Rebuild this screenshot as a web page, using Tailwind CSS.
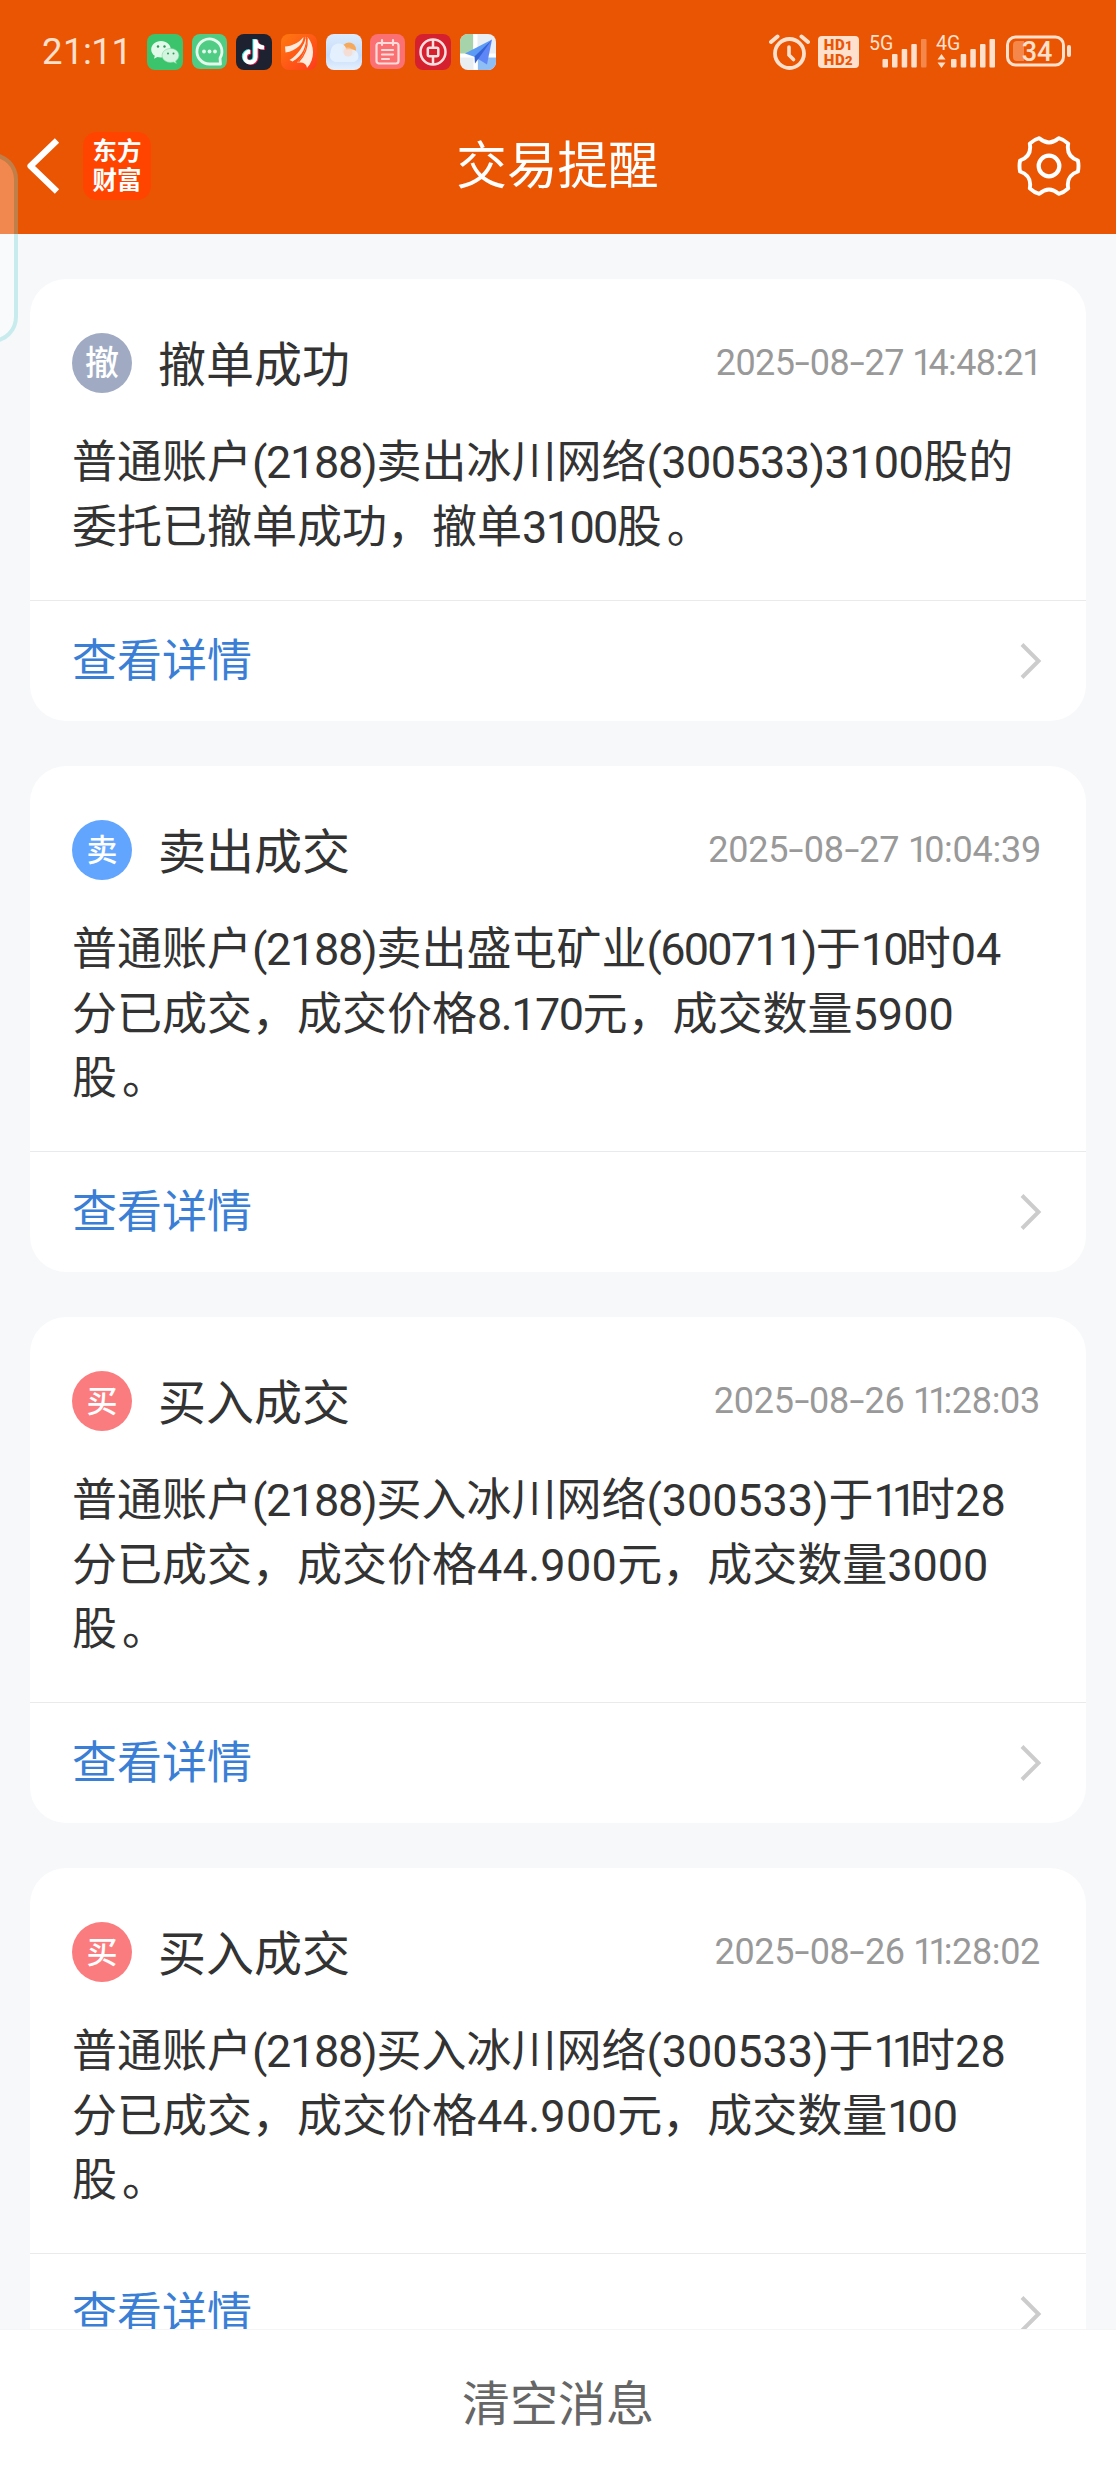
<!DOCTYPE html>
<html lang="zh-CN">
<head>
  <meta charset="UTF-8" />
  <meta name="viewport" content="width=device-width, initial-scale=1" />
  <title>交易提醒</title>
  <script src="https://cdn.jsdelivr.net/npm/@tailwindcss/browser@4"></script>
</head>
<body class="bg-[#f7f8fa] font-['Roboto','Noto_Sans_CJK_SC',sans-serif]">
  <div class="relative flex flex-col w-[1116px] h-[2480px] overflow-hidden">

    <header class="shrink-0 h-[234px] bg-[#ea5504]">
      <!-- Status bar -->
      <div class="flex items-center justify-between h-[104px] pl-[42px] pr-[45px] text-[#ffe0cc]">
        <div class="flex items-center">
          <span class="w-[105px] text-[36.5px] leading-none"><span class="tracking-[0.5px]">2</span><span class="tracking-[-0.5px]">1:1</span>1</span>
          <div class="flex gap-[8.7px]">
            <!-- WeChat -->
            <svg class="w-9 h-9" viewBox="0 0 36 36">
              <rect width="36" height="36" rx="8" fill="#3cc46c" />
              <path d="M14 7c-5.500 0-9.800 3.800-9.800 8.400 0 2.600 1.400 4.900 3.600 6.400l-.8 3 3.400-1.800c1.100.3 2.300.5 3.600.5 5.500 0 9.800-3.700 9.800-8.200S19.500 7 14 7z" fill="#e3faea" />
              <path d="M23.500 14.500c-4.700 0-8.400 3.100-8.400 6.900s3.700 7 8.400 7c1 0 2-.1 2.900-.4l3 1.400-.8-2.500c2-1.300 3.300-3.300 3.300-5.500 0-3.800-3.700-6.900-8.400-6.900z" fill="#d3f5df" stroke="#7fd9a0" stroke-width=".6" />
              <g fill="#2b9a55"><circle cx="11" cy="12.500" r="1.200" /><circle cx="17.500" cy="12.500" r="1.200" /><circle cx="21" cy="19.500" r="1" /><circle cx="26.500" cy="19.500" r="1" /></g>
            </svg>
            <!-- Messages -->
            <svg class="w-9 h-9" viewBox="0 0 36 36">
              <rect width="35" height="35" rx="8" fill="#50cc84" />
              <path d="M28.500 30H17.500A12.500 12.500 0 1 1 28 24.200z" fill="none" stroke="#e4faec" stroke-width="2.800" stroke-linejoin="round" />
              <g fill="#e4faec"><circle cx="12" cy="17.500" r="1.900" /><circle cx="17.500" cy="17.500" r="1.900" /><circle cx="23" cy="17.500" r="1.900" /></g>
            </svg>
            <!-- Douyin -->
            <svg class="w-9 h-9" viewBox="0 0 36 36">
              <rect width="36" height="36" rx="8" fill="#1d2130" />
              <g fill="none" stroke-width="4.200">
                <path d="M18.500 5v17.500a5.300 5.300 0 1 1-5.300-5.300M18.500 6.500c.8 4.200 4 6.300 8.500 6.500" stroke="#3fe0e0" />
                <path d="M20.500 6v17.500a5.300 5.300 0 1 1-5.300-5.300M20.500 7.500c.8 4.200 4 6.300 8.500 6.500" stroke="#f0285a" />
                <path d="M19.500 5.500v17.500a5.300 5.300 0 1 1-5.300-5.300M19.500 7c.8 4.200 4 6.300 8.500 6.500" stroke="#fff" />
              </g>
            </svg>
            <!-- Eastmoney securities -->
            <svg class="w-9 h-9" viewBox="0 0 36 36">
              <defs><linearGradient id="em" x1="0" y1="0" x2="1" y2="1"><stop offset="0" stop-color="#ff7a10" /><stop offset="1" stop-color="#ff3a1c" /></linearGradient></defs>
              <rect width="36" height="36" rx="8" fill="url(#em)" />
              <g fill="#ffeadd">
                <path d="M4 12.500C11 12 18 9 22.500 3c0 6-7 14-18 15.500z" />
                <path d="M8.500 26C17 21 23 12 24.500 2.500c2 8-3 20-13 25z" />
                <path d="M16 28.500C23 22 26 12 26.500 3c7 8 8 22-.5 31-.5-4-3-6-10-5.500z" />
              </g>
              <path d="M24 4c-1 7-7 13-15 17M26 4c1 9-2 17-8.500 24" fill="none" stroke="#ff5a18" stroke-width="1.200" />
            </svg>
            <!-- Weather -->
            <svg class="w-9 h-9" viewBox="0 0 36 36">
              <defs><linearGradient id="wt" x1="0" y1="0" x2="0" y2="1"><stop offset="0" stop-color="#dcebfb" /><stop offset=".6" stop-color="#c3dcfb" /><stop offset="1" stop-color="#e6f0fc" /></linearGradient></defs>
              <rect width="36" height="36" rx="8" fill="url(#wt)" />
              <circle cx="23" cy="15.500" r="7" fill="#f5a95c" />
              <path d="M10 28a6.500 6.500 0 0 1-5.500-9.500C5 12 9 9.500 13 9.500s6.500 2.500 7.500 6c5-1 12 .5 12 6.500 0 4-3 6-6.500 6z" fill="#e6f1fe" fill-opacity=".93" />
              <circle cx="22" cy="18" r="4.500" fill="#fbd3c0" fill-opacity=".6" />
            </svg>
            <!-- Calendar -->
            <svg class="w-9 h-9" viewBox="0 0 36 36">
              <rect width="35" height="35" rx="8" fill="#fb7072" />
              <g fill="none" stroke="#ffdcdc" stroke-width="2.200" stroke-linecap="round">
                <rect x="6.500" y="9" width="22" height="20.500" rx="2.500" />
                <path d="M12 6v5M23 6v5M12 16h11M12 20.500h11M12 25h7" />
              </g>
            </svg>
            <!-- Bank of China -->
            <svg class="w-9 h-9" viewBox="0 0 36 36">
              <rect width="36" height="36" rx="8" fill="#d5202f" />
              <g fill="none" stroke="#ffdfe0" stroke-width="2.500">
                <circle cx="18" cy="18" r="12.500" />
                <rect x="12.800" y="13.800" width="10.500" height="8.500" rx="1.500" />
                <path d="M18 5.500v8M18 22.500v8" />
              </g>
            </svg>
            <!-- Maps -->
            <svg class="w-9 h-9" viewBox="0 0 36 36">
              <defs><clipPath id="mp"><rect width="36" height="36" rx="8" /></clipPath></defs>
              <g clip-path="url(#mp)">
                <rect width="36" height="36" fill="#e9eef3" />
                <rect width="13" height="20" fill="#a6d3aa" />
                <path d="M18 23h18v13H18z" fill="#8fbef5" />
                <path d="M15.500 0v36M0 21.500h36" stroke="#fff" stroke-width="4" />
              </g>
              <path d="M32 5.500 5 19.500l10 3.500z" fill="#5b9bf5" />
              <path d="M32 5.500 15 23l12 7.500z" fill="#5f86f7" />
              <path d="M32 5.500 14.500 22.500l.5 7z" fill="#3564d8" />
            </svg>
          </div>
        </div>

        <div class="flex items-center">
          <!-- Alarm -->
          <svg class="w-[41px] h-9 mr-2" viewBox="0 0 41 36" fill="none" stroke="currentColor" stroke-linecap="round">
            <circle cx="20.500" cy="19.500" r="14.500" stroke-width="3.800" />
            <path d="M20 13v8l4.500 4.500" stroke-width="3.600" />
            <path d="M2 8l6.500-5.500M39 8l-6.500-5.500" stroke-width="4" />
          </svg>
          <!-- HD1 / HD2 -->
          <div class="w-[41px] h-8 mr-[9px] rounded-[4px] bg-[#ffe0cc] text-[#ea5504] text-[15px] leading-[14px] pt-[2px] font-black text-center tracking-[0.5px]">
            <p>HD<span class="text-[13px]">1</span></p>
            <p>HD<span class="text-[13px]">2</span></p>
          </div>
          <!-- 5G signal -->
          <svg class="w-[60px] h-10 mr-[7px]" viewBox="-1 -2 60 40" fill="currentColor">
            <text x="0" y="16" font-size="19.500">5G</text>
            <rect x="13.500" y="25" width="5.500" height="8.500" rx="1" />
            <rect x="23" y="20" width="5.500" height="13.500" rx="1" />
            <rect x="32.700" y="15" width="5.500" height="18.500" rx="1" />
            <rect x="42.300" y="10" width="5.500" height="23.500" rx="1" />
            <rect x="52" y="5" width="5.500" height="28.500" rx="1" fill="#f5874a" />
          </svg>
          <!-- 4G signal -->
          <svg class="w-[61px] h-10 mr-[10px]" viewBox="-1 -2 61 40" fill="currentColor">
            <text x="0" y="16" font-size="19.500">4G</text>
            <path d="M1.500 25.500 5.500 20l4 5.500zM1.500 28.500l4 5.500 4-5.500z" />
            <rect x="15" y="25" width="5.500" height="8.500" rx="1" />
            <rect x="24.700" y="20" width="5.500" height="13.500" rx="1" />
            <rect x="34.300" y="15" width="5.500" height="18.500" rx="1" />
            <rect x="44" y="10" width="5.500" height="23.500" rx="1" />
            <rect x="53.500" y="5" width="5.500" height="28.500" rx="1" />
          </svg>
          <!-- Battery -->
          <svg class="w-[65px] h-9" viewBox="0 0 65 36" fill="currentColor">
            <rect x="1.500" y="3" width="56" height="28" rx="8" fill="none" stroke="currentColor" stroke-width="3" />
            <path d="M11 7h7v20h-7a4 4 0 0 1-4-4V11a4 4 0 0 1 4-4z" fill="#f5874a" />
            <rect x="61" y="11" width="4" height="12" rx="2" />
            <text x="31" y="26.500" font-size="27" font-weight="500" text-anchor="middle">34</text>
          </svg>
        </div>
      </div>

      <!-- Title bar -->
      <div class="grid grid-cols-3 items-center h-[124px] pl-[26px] pr-[35px] text-white">
        <div class="flex items-center gap-[23px]">
          <svg class="w-[34px] h-[56px]" viewBox="0 0 34 56" fill="none" stroke="#fff" stroke-width="6.200" stroke-linejoin="round"><path d="M31 2.500 4.500 28 31 53.500" /></svg>
          <div class="w-[68px] h-[68px] pt-[5px] rounded-[14px] bg-[#ff4400] text-[24.5px] leading-[29px] font-bold text-center">
            <p>东方</p>
            <p>财富</p>
          </div>
        </div>
        <h1 class="pl-[8px] pt-[2px] text-[50.6px] leading-none text-center whitespace-nowrap">交易提醒</h1>
        <svg class="justify-self-end w-[64px] h-[64px]" viewBox="-99 -99 198 198" fill="none" stroke="#fff" stroke-width="12" stroke-linejoin="round">
          <path d="M-30-86Q0-60 30-86Q46-82 59.500-69Q52-30 89.500-17Q93 0 89.500 17Q52 30 59.500 69Q46 82 30 86Q0 60-30 86Q-46 82-59.500 69Q-52 30-89.500 17Q-93 0-89.500-17Q-52-30-59.500-69Q-46-82-30-86z" />
          <circle r="32" stroke-width="13" />
        </svg>
      </div>
    </header>

    <main class="flex-1 min-h-0 overflow-hidden flex flex-col gap-[45px] pt-[45px] px-[30px]">

      <section class="shrink-0 bg-white rounded-[36px]">
        <div class="flex items-center h-[150px] pl-[42px] pr-[45px] pt-[18px]">
          <span class="flex items-center justify-center w-[60px] h-[60px] rounded-full bg-[#a0abc3] text-white text-[34px] font-medium leading-none">撤</span>
          <h2 class="ml-[26px] pt-[5px] text-[48px] leading-none text-[#333]">撤单成功</h2>
          <time class="ml-auto text-[36px] leading-none text-[#999] tracking-[-0.6px] whitespace-nowrap">2025<span class="inline-block w-[15.5px] text-center scale-x-150">-</span>08<span class="inline-block w-[15.5px] text-center scale-x-150">-</span>27 <span class="tracking-[-4px]">1</span>4:48:<span class="tracking-[-1.5px]">21</span></time>
        </div>
        <p class="h-[171px] pt-[2px] px-[42px] text-[45px] leading-[64.5px] text-[#333] whitespace-nowrap">普通账户<span class="tracking-[-1.3px]">(2188)</span>卖出冰川网络<span class="tracking-[-0.6px]">(300533)3100</span>股的<br />委托已撤单成功，撤单<span class="tracking-[-1.6px]">3100</span>股<span class="ml-[5px]">。</span></p>
        <a class="flex items-center justify-between h-[121px] pl-[42px] pr-[44px] border-t border-[#e9eaec] text-[45px] leading-none text-[#3a7fd5]">查看详情
          <svg class="w-[22px] h-[38px]" viewBox="0 0 22 38" fill="none" stroke="#ccc" stroke-width="4"><path d="M2 2.500 18.500 19 2 35.500" /></svg>
        </a>
      </section>

      <section class="shrink-0 bg-white rounded-[36px]">
        <div class="flex items-center h-[150px] pl-[42px] pr-[45px] pt-[18px]">
          <span class="flex items-center justify-center w-[60px] h-[60px] rounded-full bg-[#62a5fe] text-white text-[31px] font-medium leading-none">卖</span>
          <h2 class="ml-[26px] pt-[5px] text-[48px] leading-none text-[#333]">卖出成交</h2>
          <time class="ml-auto text-[36px] leading-none text-[#999] tracking-[-0.25px] whitespace-nowrap">2025<span class="inline-block w-[15.5px] text-center scale-x-150">-</span>08<span class="inline-block w-[15.5px] text-center scale-x-150">-</span>27 <span class="tracking-[-4px]">1</span>0:04:39</time>
        </div>
        <p class="h-[235px] pt-[2px] px-[42px] text-[45px] leading-[64.5px] text-[#333] whitespace-nowrap">普通账户<span class="tracking-[-1.3px]">(2188)</span>卖出盛屯矿业<span class="tracking-[-1.7px]">(600711)</span>于<span class="tracking-[-2.8px]">10</span>时04<br />分已成交，成交价格<span class="tracking-[-1.5px]">8.170</span>元，成交数量5900<br />股<span class="ml-[5px]">。</span></p>
        <a class="flex items-center justify-between h-[121px] pl-[42px] pr-[44px] border-t border-[#e9eaec] text-[45px] leading-none text-[#3a7fd5]">查看详情
          <svg class="w-[22px] h-[38px]" viewBox="0 0 22 38" fill="none" stroke="#ccc" stroke-width="4"><path d="M2 2.500 18.500 19 2 35.500" /></svg>
        </a>
      </section>

      <section class="shrink-0 bg-white rounded-[36px]">
        <div class="flex items-center h-[150px] pl-[42px] pr-[46px] pt-[18px]">
          <span class="flex items-center justify-center w-[60px] h-[60px] rounded-full bg-[#fb7c7e] text-white text-[31px] font-medium leading-none">买</span>
          <h2 class="ml-[26px] pt-[5px] text-[48px] leading-none text-[#333]">买入成交</h2>
          <time class="ml-auto text-[36px] leading-none text-[#999] tracking-[-0.3px] whitespace-nowrap">2025<span class="inline-block w-[15.5px] text-center scale-x-150">-</span>08<span class="inline-block w-[15.5px] text-center scale-x-150">-</span>26 <span class="tracking-[-5px]">11</span>:28:03</time>
        </div>
        <p class="h-[235px] pt-[2px] px-[42px] text-[45px] leading-[64.5px] text-[#333] whitespace-nowrap">普通账户<span class="tracking-[-1.3px]">(2188)</span>买入冰川网络<span class="tracking-[-0.1px]">(300533)</span>于<span class="tracking-[-7px]">11</span>时28<br />分已成交，成交价格<span class="tracking-[0.3px]">44.900</span>元，成交数量3000<br />股<span class="ml-[5px]">。</span></p>
        <a class="flex items-center justify-between h-[121px] pl-[42px] pr-[44px] border-t border-[#e9eaec] text-[45px] leading-none text-[#3a7fd5]">查看详情
          <svg class="w-[22px] h-[38px]" viewBox="0 0 22 38" fill="none" stroke="#ccc" stroke-width="4"><path d="M2 2.500 18.500 19 2 35.500" /></svg>
        </a>
      </section>

      <section class="shrink-0 bg-white rounded-[36px]">
        <div class="flex items-center h-[150px] pl-[42px] pr-[46px] pt-[18px]">
          <span class="flex items-center justify-center w-[60px] h-[60px] rounded-full bg-[#fb7c7e] text-white text-[31px] font-medium leading-none">买</span>
          <h2 class="ml-[26px] pt-[5px] text-[48px] leading-none text-[#333]">买入成交</h2>
          <time class="ml-auto text-[36px] leading-none text-[#999] tracking-[-0.35px] whitespace-nowrap">2025<span class="inline-block w-[15.5px] text-center scale-x-150">-</span>08<span class="inline-block w-[15.5px] text-center scale-x-150">-</span>26 <span class="tracking-[-5px]">11</span>:28:02</time>
        </div>
        <p class="h-[235px] pt-[2px] px-[42px] text-[45px] leading-[64.5px] text-[#333] whitespace-nowrap">普通账户<span class="tracking-[-1.3px]">(2188)</span>买入冰川网络<span class="tracking-[-0.1px]">(300533)</span>于<span class="tracking-[-7px]">11</span>时28<br />分已成交，成交价格<span class="tracking-[0.3px]">44.900</span>元，成交数量<span class="tracking-[-5px]">1</span>00<br />股<span class="ml-[5px]">。</span></p>
        <a class="flex items-center justify-between h-[121px] pl-[42px] pr-[44px] border-t border-[#e9eaec] text-[45px] leading-none text-[#3a7fd5]">查看详情
          <svg class="w-[22px] h-[38px]" viewBox="0 0 22 38" fill="none" stroke="#ccc" stroke-width="4"><path d="M2 2.500 18.500 19 2 35.500" /></svg>
        </a>
      </section>
    </main>

    <footer class="shrink-0 flex items-center justify-center h-[151px] bg-white border-t border-[#f5f5f6]">
      <button class="text-[48px] leading-none text-[#666]">清空消息</button>
    </footer>

    <!-- Edge panel handle -->
    <div class="absolute left-[-40px] top-[153px] w-[58px] h-[190px] rounded-[26px] border-4 border-[rgba(105,210,215,0.33)] bg-white/30 bg-clip-padding"></div>
  </div>
</body>
</html>
